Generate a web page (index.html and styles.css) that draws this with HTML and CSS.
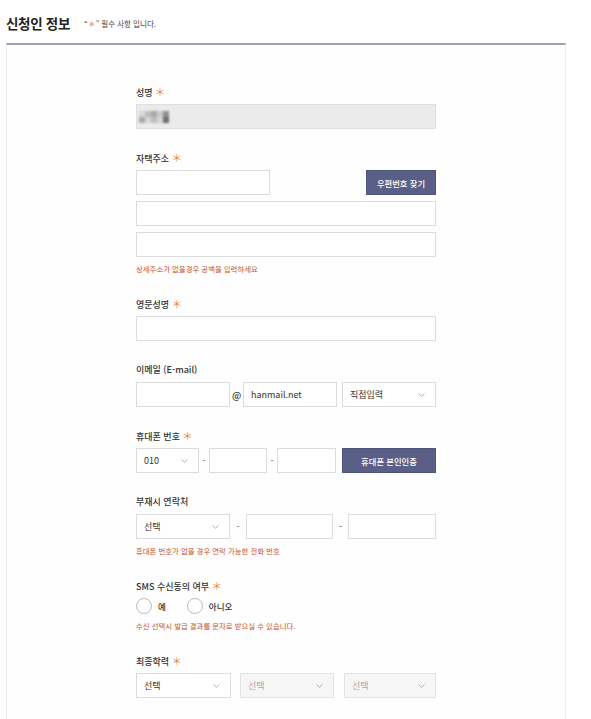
FILE: index.html
```html
<!DOCTYPE html>
<html lang="ko">
<head>
<meta charset="utf-8">
<title>신청인 정보</title>
<link rel="stylesheet" href="styles.css">
</head>
<body>
<div class="page">
  <div class="head">
    <h2 class="title">신청인 정보</h2>
    <span class="note">“<span class="star">＊</span>” 필수 사항 입니다.</span>
  </div>
  <div class="box">
    <div class="form">
      <div class="group">
        <div class="label">성명 <span class="star">＊</span></div>
        <div class="input readonly">
          <span class="mosaic">
            <i class="m1"></i><i class="m2"></i><i class="m3"></i><i class="m4"></i><i class="m5"></i>
            <i class="m3"></i><i class="m1"></i><i class="m2"></i><i class="m1"></i><i class="m6"></i>
          </span>
        </div>
      </div>

      <div class="group">
        <div class="label">자택주소 <span class="star">＊</span></div>
        <div class="row between">
          <div class="input w134"></div>
          <div class="btn w70">우편번호 찾기</div>
        </div>
        <div class="input mt6"></div>
        <div class="input mt6"></div>
        <div class="hint">상세주소가 없을경우 공백을 입력하세요</div>
      </div>

      <div class="group">
        <div class="label">영문성명 <span class="star">＊</span></div>
        <div class="input"></div>
      </div>

      <div class="group">
        <div class="label">이메일 (E-mail)</div>
        <div class="row">
          <div class="input w94"></div>
          <span class="at">@</span>
          <div class="input w94">hanmail.net</div>
          <div class="select w94 ml5">직접입력<svg class="chev" viewBox="0 0 7 4"><path d="M0.5 0.5 L3.5 3.3 L6.5 0.5"/></svg></div>
        </div>
      </div>

      <div class="group">
        <div class="label">휴대폰 번호 <span class="star">＊</span></div>
        <div class="row">
          <div class="select w63">010<svg class="chev" viewBox="0 0 7 4"><path d="M0.5 0.5 L3.5 3.3 L6.5 0.5"/></svg></div>
          <span class="dash d10">-</span>
          <div class="input w58"></div>
          <span class="dash d10">-</span>
          <div class="input w59"></div>
          <div class="btn w94 ml6">휴대폰 본인인증</div>
        </div>
      </div>

      <div class="group">
        <div class="label">부재시 연락처</div>
        <div class="row">
          <div class="select w94">선택<svg class="chev" viewBox="0 0 7 4"><path d="M0.5 0.5 L3.5 3.3 L6.5 0.5"/></svg></div>
          <span class="dash d16">-</span>
          <div class="input w87"></div>
          <span class="dash d15">-</span>
          <div class="input w88"></div>
        </div>
        <div class="hint">휴대폰 번호가 없을 경우 연락 가능한 전화 번호</div>
      </div>

      <div class="group">
        <div class="label">SMS 수신동의 여부 <span class="star">＊</span></div>
        <div class="radios">
          <label class="radio"><span class="circle"></span>예</label>
          <label class="radio"><span class="circle"></span>아니오</label>
        </div>
        <div class="hint">수신 선택시 발급 결과를 문자로 받으실 수 있습니다.</div>
      </div>

      <div class="group">
        <div class="label">최종학력 <span class="star">＊</span></div>
        <div class="row">
          <div class="select w95">선택<svg class="chev" viewBox="0 0 7 4"><path d="M0.5 0.5 L3.5 3.3 L6.5 0.5"/></svg></div>
          <div class="select disabled w94 ml9">선택<svg class="chev" viewBox="0 0 7 4"><path d="M0.5 0.5 L3.5 3.3 L6.5 0.5"/></svg></div>
          <div class="select disabled w92 ml10">선택<svg class="chev" viewBox="0 0 7 4"><path d="M0.5 0.5 L3.5 3.3 L6.5 0.5"/></svg></div>
        </div>
      </div>
    </div>
  </div>
</div>
</body>
</html>
```
FILE: styles.css
```css
html, body {
  margin: 0;
  padding: 0;
  background: #ffffff;
}
body {
  font-family: "Noto Sans CJK KR", "Noto Sans", sans-serif;
  color: #333;
  overflow: hidden;
}
.page {
  width: 560px;
  margin-left: 6px;
}
.head {
  height: 43px;
  display: flex;
  align-items: center;
  gap: 14px;
  box-sizing: border-box;
  padding-top: 2px;
}
.title {
  margin: 0;
  font-size: 13.5px;
  font-weight: 700;
  color: #222;
  letter-spacing: -0.3px;
}
.note {
  font-size: 7.5px;
  color: #444;
  padding-top: 2px;
}
.note .star {
  font-size: 8px;
}
.star {
  color: #e8843d;
  font-weight: 400;
  font-size: 10px;
}
.box {
  border-top: 2px solid #9da2bd;
  border-left: 1px solid #ececec;
  border-right: 1px solid #ececec;
  background: #fefefe;
  padding: 40px 0 60px 129px;
}
.form {
  width: 300px;
}
.group {
  margin-bottom: 22px;
}
.label {
  font-size: 9px;
  line-height: 14px;
  height: 14px;
  margin-bottom: 5px;
  color: #333;
  font-weight: 500;
}
.row {
  display: flex;
  align-items: center;
}
.row.between {
  justify-content: space-between;
}
.input, .select {
  box-sizing: border-box;
  height: 25px;
  border: 1px solid #dcdcdc;
  background: #fff;
  font-size: 9px;
  line-height: 23px;
  padding-left: 7px;
  color: #333;
}
.input.readonly {
  background: #ebebeb;
  border-color: #e0e0e0;
  display: flex;
  align-items: center;
  padding-left: 2px;
}
.mosaic {
  display: grid;
  grid-template-columns: repeat(5, 6px);
  grid-template-rows: repeat(2, 6px);
  filter: blur(0.8px);
}
.mosaic i { display: block; }
.m1 { background: #d6d6d6; }
.m2 { background: #bdbdbd; }
.m3 { background: #a9a9a9; }
.m4 { background: #c9c9c9; }
.m5 { background: #8e8e8e; }
.m6 { background: #6f6f6f; }
.select {
  position: relative;
}
.select.disabled {
  background: #f6f6f6;
  color: #aaa;
  border-color: #e3e3e3;
}
.chev {
  position: absolute;
  right: 10px;
  top: 10px;
  width: 7px;
  height: 4px;
  fill: none;
  stroke: #a8a8a8;
  stroke-width: 0.9;
}
.btn {
  box-sizing: border-box;
  height: 25px;
  background: #5a5f87;
  border: 1px solid #50557b;
  color: #fff;
  font-size: 8.3px;
  font-weight: 500;
  display: flex;
  align-items: center;
  justify-content: center;
}
.mt6 { margin-top: 6px; }
.ml5 { margin-left: 5px; }
.ml6 { margin-left: 6px; }
.ml9 { margin-left: 9px; }
.ml10 { margin-left: 10px; }
.w58 { width: 58px; }
.w59 { width: 59px; }
.w63 { width: 63px; }
.w70 { width: 70px; }
.w87 { width: 87px; }
.w88 { width: 88px; }
.w92 { width: 92px; }
.w94 { width: 94px; }
.w95 { width: 95px; }
.w134 { width: 134px; }
.at {
  width: 13px;
  text-align: center;
  font-size: 9.5px;
  font-weight: 500;
  color: #333;
}
.dash {
  text-align: center;
  font-size: 9px;
  color: #555;
}
.d10 { width: 10px; }
.d15 { width: 15px; }
.d16 { width: 16px; }
.hint {
  margin-top: 5px;
  font-size: 7.4px;
  line-height: 13px;
  color: #c9531f;
}
.radios {
  display: flex;
  align-items: center;
  gap: 21px;
  height: 16px;
}
.radio {
  display: flex;
  align-items: center;
  gap: 6px;
  font-size: 8.5px;
  color: #333;
  font-weight: 500;
}
.circle {
  box-sizing: border-box;
  width: 16px;
  height: 16px;
  border: 1px solid #bdbdbd;
  border-radius: 50%;
  background: #fff;
}
```
